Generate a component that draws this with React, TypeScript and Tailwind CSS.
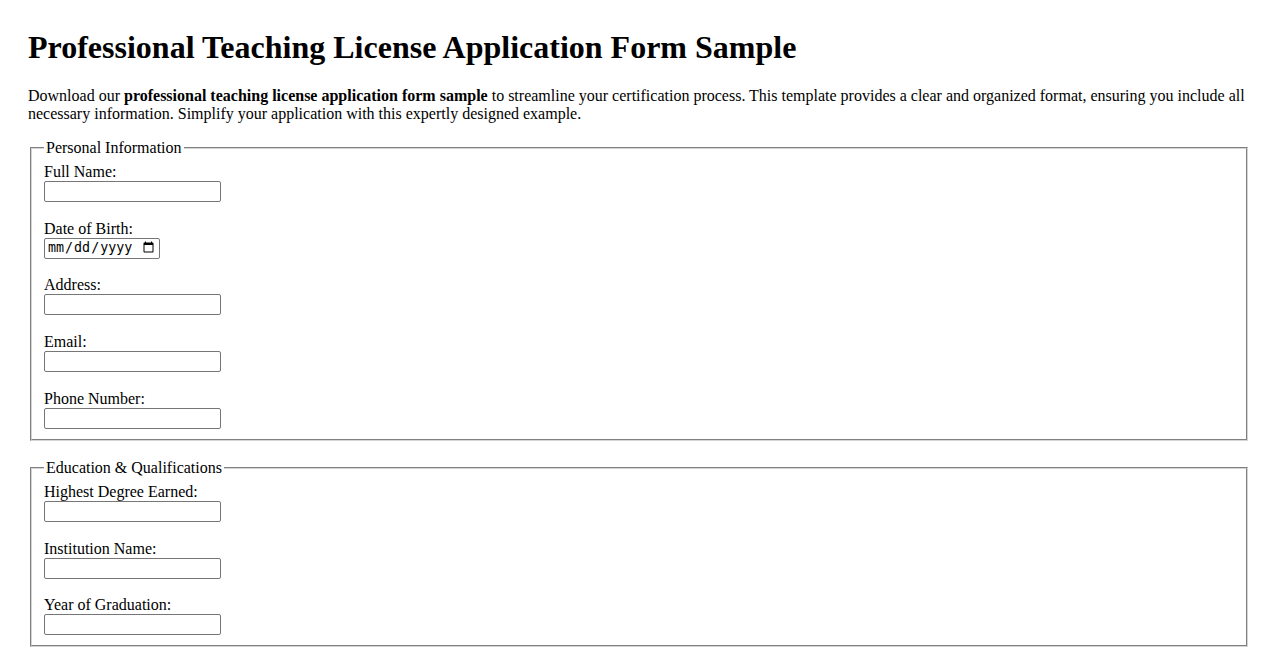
import React from 'react';

const serif = { fontFamily: '"Liberation Serif", "Times New Roman", serif' };

const inputCls =
  'block w-[177px] h-[21px] border border-[#767676] rounded-[2px] px-[2px] py-[1px] text-[13.33px] bg-white';

const Field = ({ label, type = 'text', last = false }: { label: string; type?: string; last?: boolean }) => (
  <div className={last ? '' : 'mb-[17.75px]'}>
    <label className="block leading-[18px]">{label}</label>
    {type === 'date' ? (
      <input
        type="date"
        className="block w-[116px] h-[21px] border border-[#767676] rounded-[2px] px-[2px] py-[1px] text-[13.33px] bg-white"
        style={{ fontFamily: '"DejaVu Sans Mono", monospace' }}
      />
    ) : (
      <input type={type} className={inputCls} style={{ fontFamily: '"Liberation Sans", Arial, sans-serif' }} />
    )}
  </div>
);

const Section = ({ title, children }: { title: string; children: React.ReactNode }) => (
  <fieldset className="mx-[2px] mb-[18px] border-2 [border-style:groove] border-[#d4d4d4] px-[12px] pt-[6px] pb-[10px]">
    <legend className="px-[2px] leading-[18px]">{title}</legend>
    {children}
  </fieldset>
);

export default function App() {
  return (
    <div className="bg-white text-black text-[16px] px-[28px] pt-[29px] pb-[20px] min-h-screen" style={serif}>
      <h1 className="text-[32px] font-bold leading-[1.15] mb-[21px]">Professional Teaching License Application Form Sample</h1>
      <p className="leading-[18px] mb-[16px]">
        Download our <strong>professional teaching license application form sample</strong> to streamline your certification
        process. This template provides a clear and organized format, ensuring you include all necessary information. Simplify
        your application with this expertly designed example.
      </p>

      <form>
        <Section title="Personal Information">
          <Field label="Full Name:" />
          <Field label="Date of Birth:" type="date" />
          <Field label="Address:" />
          <Field label="Email:" type="email" />
          <Field label="Phone Number:" type="tel" last />
        </Section>

        <Section title="Education & Qualifications">
          <Field label="Highest Degree Earned:" />
          <Field label="Institution Name:" />
          <Field label="Year of Graduation:" last />
        </Section>
      </form>
    </div>
  );
}
